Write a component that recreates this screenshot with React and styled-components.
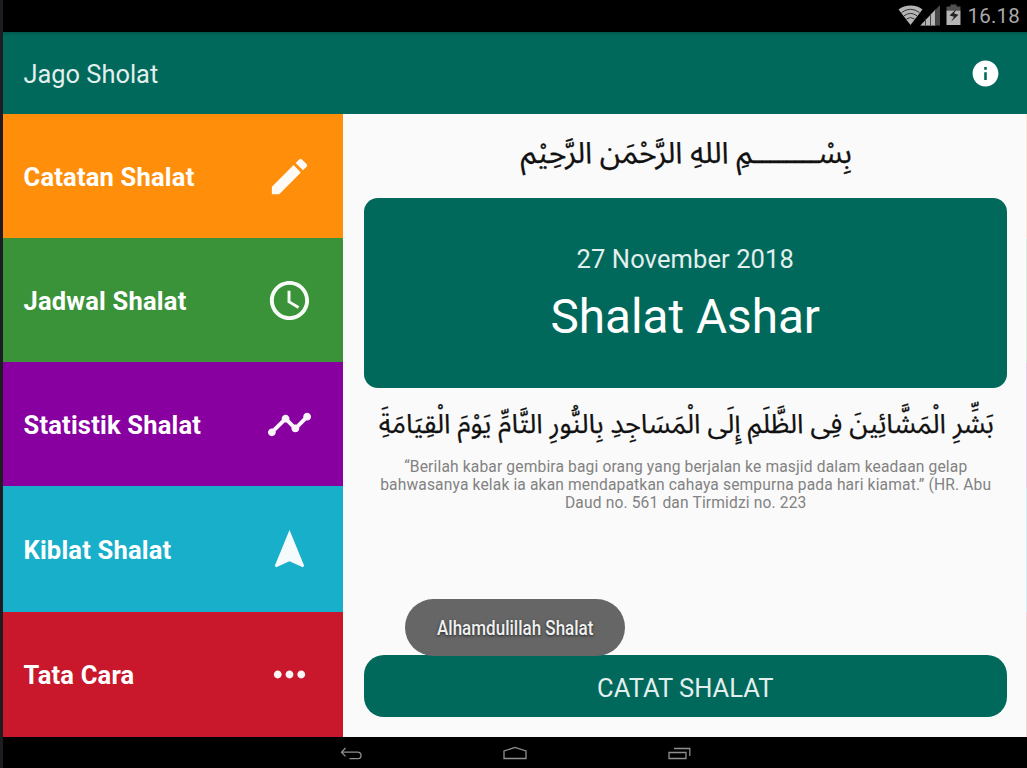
import React from "react";
import styled, { createGlobalStyle } from "styled-components";

const GlobalStyle = createGlobalStyle`
  * { box-sizing: border-box; }
  body { margin: 0; background: #000; overflow: hidden; }
`;

const Device = styled.div`
  width: 1027px;
  height: 768px;
  display: flex;
  flex-direction: column;
  border-left: 3px solid #1d1c21;
  background: #000;
  color: #fff;
  font-family: Roboto, sans-serif;
`;

const StatusBar = styled.header`
  height: 32px;
  display: flex;
  justify-content: flex-end;
  padding-right: 9px;
`;

const StatusIcons = styled.svg`
  width: 68px;
  height: 32px;
  margin-right: 1.5px;
`;

const Clock = styled.span`
  width: 50.5px;
  font-size: 20.5px;
  line-height: 32px;
  color: #a9a9a9;
  white-space: nowrap;
  letter-spacing: 0.2px;
`;

const AppBar = styled.div`
  height: 82px;
  display: flex;
  align-items: center;
  justify-content: space-between;
  padding: 1px 25px 0 20.5px;
  background: linear-gradient(#00594d, #00695c 4px);
`;

const Title = styled.h1`
  margin: 0;
  font-size: 25.4px;
  font-weight: 400;
  line-height: 30px;
  color: #e3efed;
`;

const InfoIcon = styled.svg`
  width: 31px;
  height: 31px;
  margin: 0 1px 1px 0;
  fill: #fff;
`;

const Body = styled.div`
  height: 623px;
  display: flex;
  background: #fafafa;
`;

const Menu = styled.nav`
  width: 340.3px;
  display: grid;
  grid-template-rows: 124px 124px 124.4px 125.6px 125px;
`;

const Tile = styled.a`
  display: flex;
  align-items: center;
  justify-content: space-between;
  padding: 2px 30.5px 0 20.5px;
  background: ${(p) => p.$color};
`;

const TileLabel = styled.span`
  font-size: 25.5px;
  font-weight: 700;
  line-height: 30px;
  letter-spacing: 0.2px;
`;

const TileIcon = styled.svg`
  width: 47px;
  height: 47px;
  margin-bottom: 2px;
  fill: #fff;
  opacity: 0.96;
`;

const Main = styled.main`
  flex: 1;
  position: relative;
  display: flex;
  flex-direction: column;
  padding: 0 19.5px 0 20.7px;
`;

const Arabic = styled.p`
  margin: 0;
  height: ${(p) => p.$height}px;
  padding: ${(p) => p.$top}px 0 0 2px;
  font-family: "Noto Sans Arabic", "Noto Naskh Arabic", "DejaVu Sans", sans-serif;
  font-size: ${(p) => p.$size}px;
  line-height: 40px;
  color: #111;
  -webkit-text-stroke: 0.25px #111;
  display: flex;
  justify-content: center;
  white-space: nowrap;
`;

const PrayerCard = styled.section`
  height: 189.5px;
  padding-top: 46px;
  border-radius: 14px;
  background: #00695c;
  text-align: center;
`;

const DateText = styled.div`
  font-size: 25.5px;
  line-height: 30px;
  color: #e3efed;
  letter-spacing: 0.1px;
`;

const PrayerName = styled.div`
  margin-top: 15px;
  font-size: 47.7px;
  line-height: 56px;
`;

const Quote = styled.p`
  margin: 0;
  padding-left: 1px;
  font-size: 15.6px;
  line-height: 18px;
  color: #828282;
  text-align: center;
  white-space: nowrap;
`;

const QuoteLine = styled.span`
  display: block;
  letter-spacing: 0.14px;
`;

const RecordButton = styled.button`
  height: 61.5px;
  margin: auto 0 20.5px;
  padding: 4px 0 0;
  border: 0;
  border-radius: 20px;
  background: #00695c;
  color: #e3efed;
  font: 400 25.5px/30px Roboto, sans-serif;
`;

const Toast = styled.div`
  position: absolute;
  left: 61.7px;
  top: 485px;
  width: 220px;
  height: 56.5px;
  display: flex;
  align-items: center;
  justify-content: center;
  padding-top: 1px;
  border-radius: 29px;
  background: #666;
`;

const ToastText = styled.span`
  font-size: 20.5px;
  font-weight: 500;
  line-height: 24px;
  white-space: nowrap;
  color: #f0f0f0;
  text-shadow: 0 1px 3px #222;
  transform: scaleX(0.83);
`;

const EdgeTint = styled.div`
  width: 1px;
  display: flex;
  flex-direction: column;
`;

const EdgeSegment = styled.i`
  flex: 1;
  background: ${(p) => p.$color};
  opacity: 0.16;
`;

const NavBar = styled.footer`
  flex: 1;
  display: flex;
  justify-content: center;
`;

const NavIcons = styled.svg`
  width: 360px;
  height: 30px;
  margin-top: 1px;
  fill: none;
  stroke: #8f8f8f;
  stroke-width: 1.3;
`;

const tiles = [
  {
    label: "Catatan Shalat",
    color: "#ff8f0b",
    path: "M3 17.25V21h3.75L17.81 9.94l-3.75-3.75L3 17.25zM20.71 7.04a1 1 0 0 0 0-1.41l-2.34-2.34a1 1 0 0 0-1.41 0l-1.83 1.83 3.75 3.75 1.83-1.83z",
  },
  {
    label: "Jadwal Shalat",
    color: "#3a9338",
    path: "M11.99 2C6.47 2 2 6.48 2 12s4.47 10 9.99 10C17.52 22 22 17.52 22 12S17.52 2 11.99 2zM12 20c-4.42 0-8-3.58-8-8s3.58-8 8-8 8 3.58 8 8-3.58 8-8 8zm.5-13H11v6l5.25 3.15.75-1.23-4.5-2.67z",
  },
  {
    label: "Statistik Shalat",
    color: "#8800a0",
    path: "M23 8c0 1.1-.9 2-2 2-.18 0-.35-.02-.51-.07l-3.56 3.55c.05.16.07.34.07.52 0 1.1-.9 2-2 2s-2-.9-2-2c0-.18.02-.36.07-.52l-2.55-2.55c-.16.05-.34.07-.52.07s-.36-.02-.52-.07l-4.55 4.56c.05.16.07.33.07.51 0 1.1-.9 2-2 2s-2-.9-2-2 .9-2 2-2c.18 0 .35.02.51.07l4.56-4.55C8.02 9.36 8 9.18 8 9c0-1.1.9-2 2-2s2 .9 2 2c0 .18-.02.36-.07.52l2.55 2.55c.16-.05.34-.07.52-.07s.36.02.52.07l3.55-3.56C19.02 8.35 19 8.18 19 8c0-1.1.9-2 2-2s2 .9 2 2z",
  },
  {
    label: "Kiblat Shalat",
    color: "#18afcb",
    path: "M12 2L4.5 20.29l.71.71L12 18l6.79 3 .71-.71z",
  },
  {
    label: "Tata Cara",
    color: "#c9182b",
    path: "M6 10c-1.1 0-2 .9-2 2s.9 2 2 2 2-.9 2-2-.9-2-2-2zm12 0c-1.1 0-2 .9-2 2s.9 2 2 2 2-.9 2-2-.9-2-2-2zm-6 0c-1.1 0-2 .9-2 2s.9 2 2 2 2-.9 2-2-.9-2-2-2z",
  },
];

function SystemStatus() {
  return (
    <StatusIcons viewBox="898 0 68 32">
      <path d="M898.5 9.5C905 4.3 916.5 4.3 922.5 9.5L910.5 25z" fill="#b5b5b5" />
      <path
        d="M901.5 12.5q9-6.5 18 0M904 15.8q6.5-4.8 13 0M906.5 19q4-3 8 0"
        fill="none"
        stroke="#333"
        strokeWidth="1"
      />
      <path d="M940 5v20.5h-20z" fill="#484848" />
      <path d="M935.5 9.6v15.9h-15z" fill="#b5b5b5" />
      <path d="M925.5 19v6.5M930.5 14v11.5M935.5 9v16.5" stroke="#444" />
      <path d="M950.5 4.5h6v2h4v4h-14v-4h4z" fill="#505050" />
      <path d="M946.5 10.5h14v14.5h-14z" fill="#b5b5b5" />
      <path d="M956.5 9l-7 6.5 4.5 1.3-3 5 7.5-7-4.5-1.2z" fill="#222" />
    </StatusIcons>
  );
}

export default function App() {
  return (
    <>
      <GlobalStyle />
      <Device>
        <StatusBar>
          <SystemStatus />
          <Clock>16.18</Clock>
        </StatusBar>
        <AppBar>
          <Title>Jago Sholat</Title>
          <InfoIcon viewBox="0 0 24 24">
            <path d="M12 2C6.48 2 2 6.48 2 12s4.48 10 10 10 10-4.48 10-10S17.52 2 12 2zm1 15h-2v-6h2v6zm0-8h-2V7h2v2z" />
          </InfoIcon>
        </AppBar>
        <Body>
          <Menu>
            {tiles.map((t) => (
              <Tile key={t.label} $color={t.color}>
                <TileLabel>{t.label}</TileLabel>
                <TileIcon viewBox="0 0 24 24">
                  <path d={t.path} />
                </TileIcon>
              </Tile>
            ))}
          </Menu>
          <Main>
            <Arabic $height={84.3} $top={20} $size={30} dir="rtl" lang="ar">
              بِسْــــــــمِ اللهِ الرَّحْمَن الرَّحِيْم
            </Arabic>
            <PrayerCard>
              <DateText>27 November 2018</DateText>
              <PrayerName>Shalat Ashar</PrayerName>
            </PrayerCard>
            <Arabic $height={70.2} $top={17.5} $size={26.95} dir="rtl" lang="ar">
              بَشِّرِ الْمَشَّائِينَ فِى الظَّلَمِ إِلَى الْمَسَاجِدِ بِالنُّورِ التَّامِّ يَوْمَ الْقِيَامَةَِ
            </Arabic>
            <Quote>
              <QuoteLine>“Berilah kabar gembira bagi orang yang berjalan ke masjid dalam keadaan gelap</QuoteLine>
              <QuoteLine>bahwasanya kelak ia akan mendapatkan cahaya sempurna pada hari kiamat.” (HR. Abu</QuoteLine>
              <QuoteLine>Daud no. 561 dan Tirmidzi no. 223</QuoteLine>
            </Quote>
            <RecordButton>CATAT SHALAT</RecordButton>
            <Toast>
              <ToastText>Alhamdulillah Shalat</ToastText>
            </Toast>
          </Main>
          <EdgeTint>
            {tiles.map((t) => (
              <EdgeSegment key={t.label} $color={t.color} />
            ))}
          </EdgeTint>
        </Body>
        <NavBar>
          <NavIcons viewBox="335 738 360 30">
            <path d="M345.5 748l-4 4.2 4 4.2M342 752.2h15.5q3.5 0 3.5 3.2t-3.5 3.2h-8" />
            <path d="M504 758.5v-7.5l11-3.5 11 3.5v7.5z" />
            <path d="M669 752.5h17v6h-17zM674 748.5h15.8v7.5" />
          </NavIcons>
        </NavBar>
      </Device>
    </>
  );
}
